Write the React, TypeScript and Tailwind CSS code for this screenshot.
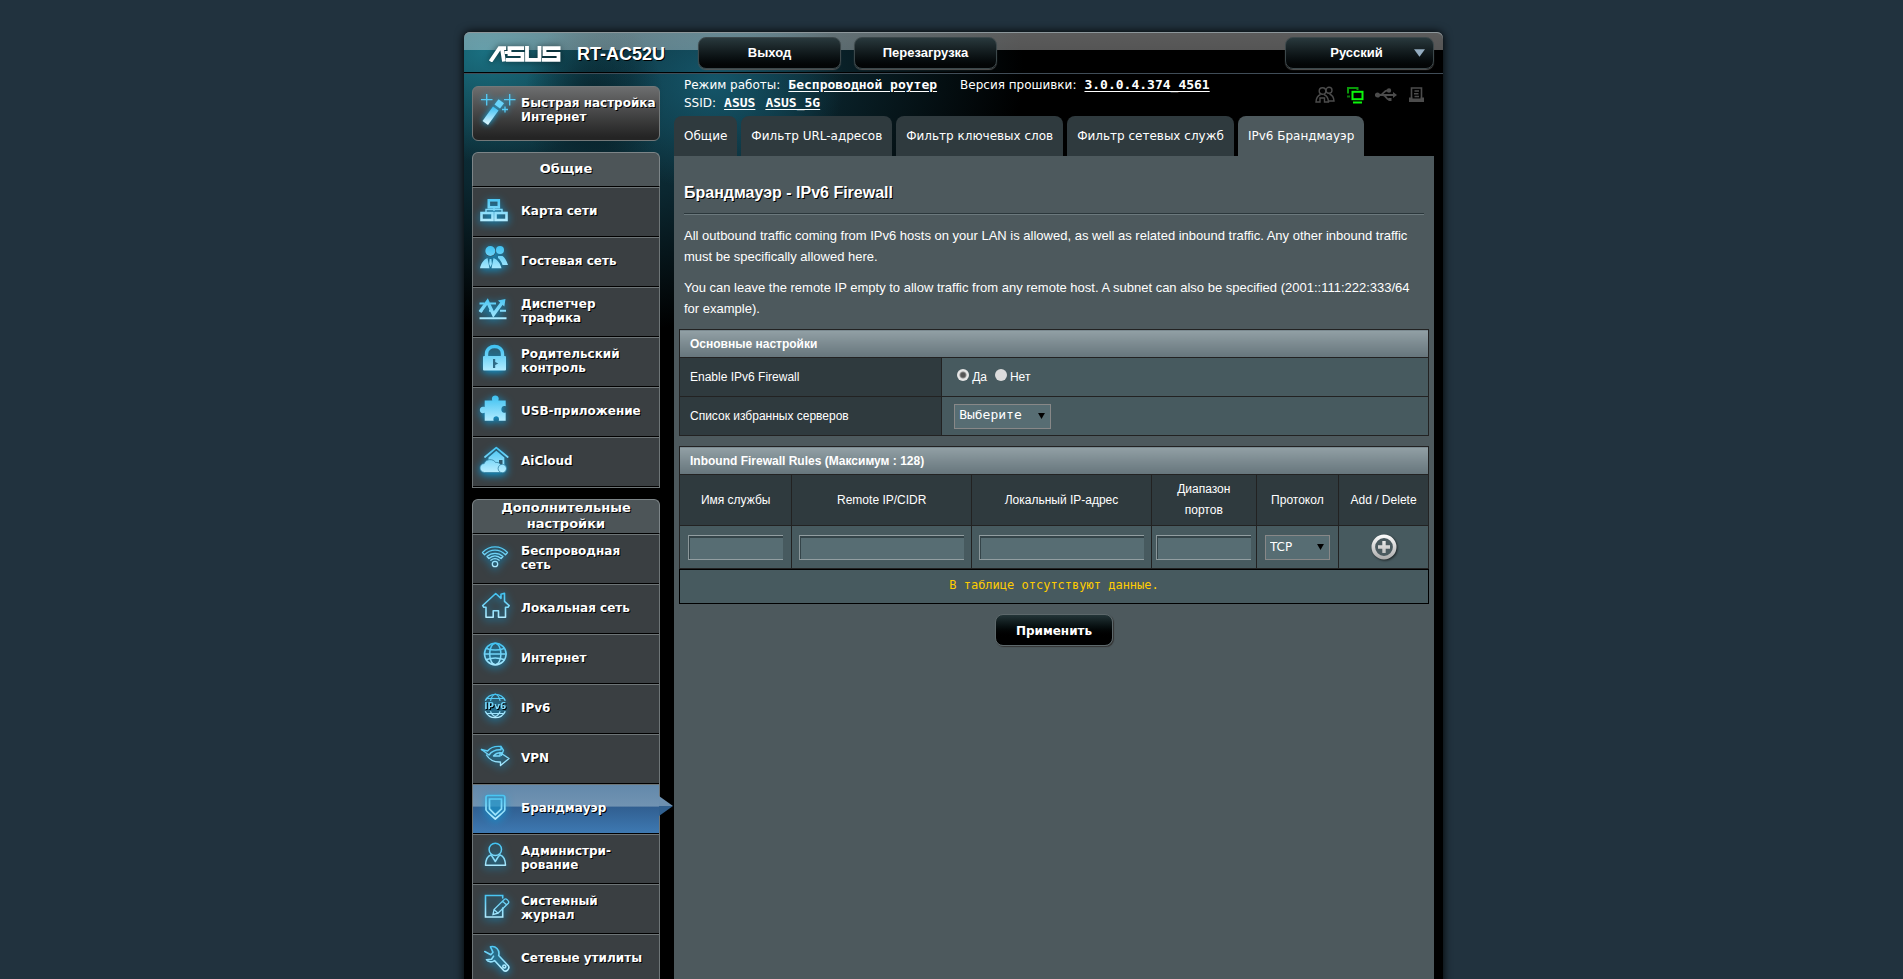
import React, { useId } from "react";

type IconName =
  | "map" | "guest" | "traffic" | "lock" | "usb" | "cloud"
  | "wifi" | "home" | "globe" | "ipv6" | "vpn" | "shield" | "admin" | "log" | "tools";

function MenuIcon({ name }: { name: IconName }) {
  const id = useId();
  const paint = `url(#${id})`;
  const solid = { fill: paint };
  const line = { fill: "none", stroke: paint, strokeWidth: 1.6, strokeLinejoin: "round" as const, strokeLinecap: "round" as const };

  const shapes: Record<IconName, React.ReactNode> = {
    map: (
      <g {...line} strokeWidth={2.6} strokeLinejoin="miter" strokeLinecap="butt">
        <rect x="12.8" y="5.3" width="10" height="7" />
        <path d="M18 12v4M10 17v-2.5h16V17" strokeWidth="1.4" />
        <rect x="5.5" y="18" width="11" height="7" />
        <rect x="19.5" y="18" width="11" height="7" />
      </g>
    ),
    guest: (
      <g {...solid}>
        <circle cx="24" cy="5" r="4" />
        <path d="M22 11h4.500c2 1 4 4.500 5.500 9h-5.500c-1-3-2.500-5.500-4.500-7z" />
        <circle cx="14.300" cy="6" r="5.600" fill="#35525f" />
        <circle cx="14.300" cy="6" r="5" />
        <path d="M11.500 13l2 10.300H4C5 18.500 7.500 14.500 11.500 13zM17.500 13c4 1.500 7 5.500 8 10.300h-10z" />
        <path d="M13.600 14h1.800l.5 5-1.400 3-1.400-3z" />
      </g>
    ),
    traffic: (
      <g {...line}>
        <path d="M3.500 8.500h5M14 8.500h6M3.500 15.700h3M13 15.700h2M24 15.700h6M3.500 23.300h27" strokeWidth="2" strokeLinecap="butt" />
        <path d="M4 17L11.500 6.500l6 13L27 6.500" strokeWidth="3.400" strokeLinejoin="miter" strokeLinecap="butt" />
        <path d="M22 5.500l7.500-1.500-1.200 7.500z" fill={paint} stroke="none" />
      </g>
    ),
    lock: (
      <g>
        <path d="M10.500 12V9c0-10 16-10 16 0v3" {...line} strokeWidth={3.4} />
        <rect x="7" y="11" width="23" height="14.500" rx="1" {...solid} />
        <path d="M17 14v9h2.200v-3l3-1.500-3-1.500v-3z" fill="#2d6a86" />
      </g>
    ),
    usb: (
      <path
        {...solid}
        d="M8.700 5.500h7.600c-2.600-6.800 8.600-6.800 6 0h7.400v5.800c-5.800-2.200-5.800 8.400 0 6.200v8.300h-7c2-6-7-6-5 0h-9v-8c-6.500 2.400-6.500-8 0-5.800z"
      />
    ),
    cloud: (
      <g>
        <path d="M9 12L20.300 2.600 31.700 12" {...line} strokeWidth={1.8} />
        <path d="M12.500 12.500l7.800-6.700 8 6.700v9h-16z" {...solid} />
        <path d="M23 15h3.500v5H23z" fill="#2f5a6d" />
        <path d="M8.500 27.500c-6-.5-6-8.500-.3-9 1.500-5 9.500-5 11.300-1 4-.5 5.800 2 5.300 4.500l-.8 5.500z" {...solid} stroke="#3482a2" strokeWidth="0.800" />
        <circle cx="26.300" cy="23.500" r="4.200" {...solid} stroke="#3482a2" strokeWidth="0.800" />
      </g>
    ),
    wifi: (
      <g {...line} strokeWidth={1.3}>
        <path d="M6.500 10.500c7-7.500 18-7.500 25 0l-2 2.200c-6-6-15-6-21 0z" />
        <path d="M11 14.500c4.500-4.300 11.500-4.300 16 0l-1.900 2c-3.700-3.400-8.500-3.400-12.200 0z" />
        <path d="M14.800 18.200c2.600-2 5.800-2 8.400 0" />
        <circle cx="19" cy="22" r="2.700" />
      </g>
    ),
    home: (
      <path
        {...line}
        d="M6.700 13.500L19.700 1.500l5.300 4.800V2.200l3.500-1v8.100l4.700 4.300-1.200 1.600h-2.500v10h-7v-6.500h-5.300v6.500H10v-10H7.800z"
      />
    ),
    globe: (
      <g {...line} strokeWidth={1.5}>
        <circle cx="19.300" cy="12" r="10.800" />
        <ellipse cx="19.300" cy="12" rx="5.600" ry="10.800" />
        <path d="M10.500 6.500c5.500 2 12.100 2 17.600 0M10.500 17.500c5.500-2 12.100-2 17.600 0M8.500 12h21.600" />
      </g>
    ),
    ipv6: (
      <g {...line} strokeWidth={1.4} strokeLinecap="butt">
        <path d="M9.300 8.800a11 11 0 0 1 20 0M9.300 19.200a11 11 0 0 0 20 0" />
        <path d="M14.500 8.800c.8-3.500 2.300-6 4.800-6.800 2.500.8 4 3.300 4.800 6.800M14.500 19.200c.8 2.500 2.300 4.400 4.800 5.200 2.500-.8 4-2.700 4.800-5.200M11 6.500h16.600M11 21.500h16.600" strokeWidth="1.200" />
        <text x="19.300" y="17.300" textAnchor="middle" fontFamily="DejaVu Sans, sans-serif" fontSize="9" fontWeight="bold" fill={paint} stroke="none">IPv6</text>
      </g>
    ),
    vpn: (
      <g {...line} strokeWidth={1.4}>
        <path d="M5.500 7.500l7.500 5.500c2.500-3.500 7-5.500 12-5.200V4.300l2.500 4-2 5v-2.500c-3.500-.2-6 .8-8 3.200h6.500v-3.500l9 6-8.500 7v-3.500c-6 .3-11-2-14-7" />
        <path d="M5.500 7.500l6 1.500c3-3.500 8-5 13-4.500" />
      </g>
    ),
    shield: (
      <g {...line} strokeWidth={1.7} strokeLinejoin="miter">
        <path d="M12 3.500h15c1 0 1.800.8 1.800 1.800V18c0 1-9.500 9-9.500 9s-9.300-8-9.300-9V5.300c0-1 1-1.800 2-1.800z" fill="#2a91bd55" />
        <path d="M13.500 7h12v9.800l-6.200 6-5.800-6z" />
      </g>
    ),
    admin: (
      <g {...line} strokeWidth={1.5}>
        <circle cx="19.300" cy="7.400" r="6.200" />
        <path d="M15 13c-3.500 1-5.300 5-5.500 10.300h20C29.300 18 27.500 14 24 13" />
        <path d="M15 13l1.500 2 2.800 4.500 2.800-4.500 1.700-2" />
      </g>
    ),
    log: (
      <g {...line} strokeLinejoin="miter">
        <path d="M26.700 6V3.500H9.500V25h17.200v-9" />
        <path d="M17 22.500l1-5L28.500 7.200c1.500-1 5.200 1.800 4 3.800L22 21.200zM18 17.500l4 3.700M26.500 9.200l4 3.500" strokeWidth="1.300" />
      </g>
    ),
    tools: (
      <g {...line} strokeWidth={1.6}>
        <path d="M8.800 9.500l6 3.300 2.200-2.500-2.500-5.500c5-1.500 9.500 3 8.200 8.700L32.500 24c1.500 3-2.300 6.500-5 4.300L18.500 18.500c-2.500 2-6.500 1.800-8-.8l5-.5 2-3" fill="#2a91bd44" />
        <circle cx="28.300" cy="24.500" r="1.500" />
      </g>
    ),
  };

  return (
    <svg
      aria-hidden="true"
      viewBox="0 0 36 34"
      className="h-[34px] w-9 shrink-0 overflow-visible drop-shadow-[0_2px_4px_#0a9edd]"
    >
      <defs>
        <linearGradient id={id} gradientUnits="userSpaceOnUse" x1="0" y1="2" x2="0" y2="26">
          <stop offset="0" stopColor="#42c3f2" />
          <stop offset="1" stopColor="#b4ecff" />
        </linearGradient>
      </defs>
      {shapes[name]}
    </svg>
  );
}

type Item = { icon: IconName; lines: string[]; active?: boolean };

const general: Item[] = [
  { icon: "map", lines: ["Карта сети"] },
  { icon: "guest", lines: ["Гостевая сеть"] },
  { icon: "traffic", lines: ["Диспетчер", "трафика"] },
  { icon: "lock", lines: ["Родительский", "контроль"] },
  { icon: "usb", lines: ["USB-приложение"] },
  { icon: "cloud", lines: ["AiCloud"] },
];

const advanced: Item[] = [
  { icon: "wifi", lines: ["Беспроводная", "сеть"] },
  { icon: "home", lines: ["Локальная сеть"] },
  { icon: "globe", lines: ["Интернет"] },
  { icon: "ipv6", lines: ["IPv6"] },
  { icon: "vpn", lines: ["VPN"] },
  { icon: "shield", lines: ["Брандмауэр"], active: true },
  { icon: "admin", lines: ["Администри-", "рование"] },
  { icon: "log", lines: ["Системный", "журнал"] },
  { icon: "tools", lines: ["Сетевые утилиты"] },
];

const menuText = "font-['DejaVu_Sans',sans-serif] text-[12px] font-bold leading-[14px] text-white [text-shadow:1px_1px_0_#000]";

function Menu({ title, items }: { title: string; items: Item[] }) {
  return (
    <nav aria-label={title} className={menuText}>
      <h2 className="flex h-[35px] items-center justify-center rounded-t-md border-x border-t border-b border-[#7d8588] border-b-black bg-[#4d5558] px-4 pb-px text-center text-[13px] leading-4">
        {title}
      </h2>
      <ul className="border-x border-b border-[#6e7577]">
        {items.map((item) => (
          <li key={item.icon} className="relative">
            <a
              href="#"
              aria-current={item.active ? "page" : undefined}
              className={
                "flex h-[50px] items-center gap-[9px] border-t border-b border-t-[#6e7577] border-b-black pl-[3px] " +
                (item.active
                  ? "bg-[linear-gradient(to_bottom,#6389ab_0%,#7193b2_44%,#315f91_46%,#3e79b2_100%)]"
                  : "bg-[#3a3f42]")
              }
            >
              <MenuIcon name={item.icon} />
              <span className="pb-[3px] whitespace-nowrap">
                {item.lines.map((text) => (
                  <span key={text} className="block">{text}</span>
                ))}
              </span>
            </a>
            {item.active && (
              <svg aria-hidden="true" viewBox="0 0 14 20" className="absolute top-3 -right-[14px] h-5 w-[14px]">
                <path d="M0 0l14 10H0z" fill="#6d90b0" />
                <path d="M0 20l14-10H0z" fill="#31608f" />
              </svg>
            )}
          </li>
        ))}
      </ul>
    </nav>
  );
}

const tabs = ["Общие", "Фильтр URL-адресов", "Фильтр ключевых слов", "Фильтр сетевых служб", "IPv6 Брандмауэр"];

const topButton =
  "h-8 rounded-lg border border-[#3c484b] bg-linear-to-b from-[#29393d] to-[#030506] to-90% text-[13px] font-bold text-white shadow-[0_1px_1px_#555]";
const field =
  "block h-[25px] border-y border-l border-y-[#929ea1] border-l-[#8a9699] bg-[#576d73] px-1 text-[12px] text-white shadow-[inset_1px_2px_0_#344449] outline-none";
const th = "border border-[#222] bg-[#2f3a3e] px-2 py-1 font-normal leading-[21px]";
const td = "border border-[#222] bg-[#475a5f]";
const caption = "h-[28px] border border-[#222] bg-linear-to-b from-[#92a0a5] to-[#66757c] pl-[10px] text-left font-bold";
const infoLink = "font-['DejaVu_Sans_Mono',monospace] text-[13px] font-bold underline underline-offset-2";

function SelectArrow({ className }: { className: string }) {
  return (
    <svg aria-hidden="true" viewBox="0 0 8 7" className={"pointer-events-none absolute h-[6px] w-[7px] " + className}>
      <path d="M0 0h8L4 7z" fill="currentColor" />
    </svg>
  );
}

export default function App() {
  return (
    <div className="h-screen overflow-hidden bg-[#21323e] pt-8 pl-1 font-['Liberation_Sans',Arial,sans-serif] text-[12px] text-white">
      <div className="mx-auto min-h-full max-w-[979px] rounded-t-md bg-black bg-[radial-gradient(ellipse_70px_90px_at_130px_70px,#061a21cc_0%,#061a2100_100%),radial-gradient(ellipse_150px_110px_at_20px_20px,#1a6f80_0%,#1a6f8000_100%),radial-gradient(ellipse_130px_110px_at_250px_50px,#15566a_0%,#15566a00_100%),radial-gradient(ellipse_440px_260px_at_120px_40px,#0f3d4a_0%,#0b2730_50%,#00000000_100%)] shadow-[0_0_10px_#000]">
        <header className="flex h-[42px] items-center rounded-t-md border-b border-[#404d58] bg-[linear-gradient(to_bottom,#ffffff5c_0,#ffffff55_18px,#00000000_18px)] pr-[9px] pl-[25px] shadow-[inset_0_1px_0_#8d979b,inset_0_-1px_0_#000]">
          <svg role="img" aria-label="ASUS" viewBox="0 0 72 16" className="mt-0.5 h-4 w-[72px] drop-shadow-[0_0_3px_#0008]">
            <g fill="none" stroke="#fff" strokeWidth="3.800">
              <path d="M1.500 15.500L10.500 2.200H17M12.800 1.500l2.200 14" />
              <path d="M35 2.200H20.500v5.800h13v5.800H17M17.500 5v3" />
              <path d="M38 0v13.800h12.500V0" />
              <path d="M71.500 2.200H55.500v5.800h14v5.800H53" />
            </g>
          </svg>
          <h1 className="mt-0.5 ml-4 w-[121px] text-[18px] leading-6 font-bold [text-shadow:1px_1px_0_#000]">RT-AC52U</h1>
          <button type="button" className={topButton + " w-[143px]"}>Выход</button>
          <button type="button" className={topButton + " ml-[13px] w-[143px]"}>Перезагрузка</button>
          <div className="relative ml-auto">
            <select aria-label="Язык" className={topButton + " w-[149px] appearance-none pr-1.5 text-center [text-align-last:center]"}>
              <option>Русский</option>
            </select>
            <svg aria-hidden="true" viewBox="0 0 12 8" className="pointer-events-none absolute top-3 right-[9px] h-2 w-[11px]">
              <path d="M0 0h12L6 8z" fill="#94acc0" />
            </svg>
          </div>
        </header>

        <div className="flex items-start gap-[14px] pr-[9px] pl-2">
          <aside className="flex w-[188px] shrink-0 flex-col pt-3">
            <a
              href="#"
              className={
                "mb-[11px] flex h-[55px] items-start rounded-md border border-[#737879] bg-linear-to-b from-[#6d6e6f] to-[#242424] to-95% pt-1 pl-[3px] " + menuText
              }
            >
              <svg aria-hidden="true" viewBox="0 0 44 40" className="h-10 w-11 shrink-0 overflow-visible drop-shadow-[0_0_3px_#12aeea]">
                <defs>
                  <linearGradient id="wand" x1="0" y1="0" x2="0" y2="1">
                    <stop offset="0" stopColor="#35bdf3" />
                    <stop offset="1" stopColor="#e4f9ff" />
                  </linearGradient>
                </defs>
                <path d="M6.500 30L17 15.500l5.500 4L12 34z" fill="url(#wand)" />
                <path d="M18.500 13.500l4-5.200 5.500 4-4 5.200z" fill="#6ad4fa" />
                <path d="M10.700 3v11.500M5 8.700h11.500M33.700 3v11.500M28 8.700h11.500M29 15.500v6M26 18.500h6" stroke="#55cbf6" strokeWidth="1.300" />
              </svg>
              <span className="mt-[5px] flex-1 pl-px whitespace-nowrap">Быстрая настройка<br />Интернет</span>
            </a>
            <Menu title="Общие" items={general} />
            <div className="mt-[11px]">
              <Menu title="Дополнительные настройки" items={advanced} />
            </div>
          </aside>

          <main className="min-w-0 flex-1">
            <div className="flex h-[42px] justify-between pl-[10px] font-['DejaVu_Sans',sans-serif] leading-[18px]">
              <div className="pt-[2px]">
                <p className="h-[18px]">
                  Режим работы:<a href="#" className={infoLink + " ml-2"}>Беспроводной роутер</a>
                  <span className="ml-[23px]">Версия прошивки:</span><a href="#" className={infoLink + " ml-2"}>3.0.0.4.374_4561</a>
                </p>
                <p className="h-[18px]">
                  SSID:<a href="#" className={infoLink + " ml-2"}>ASUS</a><a href="#" className={infoLink + " ml-[10px]"}>ASUS_5G</a>
                </p>
              </div>
              <div className="flex gap-[11px] pt-3 pr-[9px] text-[#4c4c4c]">
                <svg role="img" aria-label="Гости" viewBox="0 0 20 18" className="h-[18px] w-5" fill="none" stroke="currentColor" strokeWidth="1.400">
                  <circle cx="7.500" cy="5" r="3.300" /><circle cx="14" cy="4.300" r="3" />
                  <path d="M5.500 8.500C3 9.500 1.200 12 1 16h4v-4h4.500v4h4c-.2-4-2-6.500-4.500-7.500M14.500 8c2.500 1 4.300 3.500 4.500 7h-5" />
                </svg>
                <svg role="img" aria-label="Клиенты" viewBox="0 0 18 18" className="h-[18px] w-[18px]" fill="none">
                  <path d="M2 7.500V2h9.500v2" stroke="#0a9a0a" strokeWidth="2" /><path d="M1 10.500h3" stroke="#0a7a0a" strokeWidth="2" />
                  <rect x="6.500" y="5.800" width="10" height="7.400" stroke="#0cf50c" strokeWidth="2" />
                  <path d="M7 16.500h9" stroke="#0cf50c" strokeWidth="2" />
                </svg>
                <svg role="img" aria-label="USB" viewBox="0 0 22 18" className="h-[18px] w-[22px]" fill="none" stroke="currentColor" strokeWidth="1.800">
                  <path d="M2 9h17M5 9c3 0 4-4.500 7-4.500h2M8 9c3 0 3 4.500 6 4.500h1" />
                  <circle cx="2.500" cy="9" r="1.700" fill="currentColor" /><circle cx="14" cy="4.500" r="1.300" fill="currentColor" />
                  <path d="M18 6l4 3-4 3zM13.500 12h3v3h-3z" fill="currentColor" stroke="none" />
                </svg>
                <svg role="img" aria-label="Принтер" viewBox="0 0 17 18" className="h-[18px] w-[17px]" fill="none" stroke="currentColor" strokeWidth="1.600">
                  <path d="M3.500 12V2h10v10M6.500 5h4.500M6 7.800h4.500M6.500 10.500h4.500" /><path d="M1 11.500h3.500v1h8v-1H16V16H1z" fill="currentColor" stroke="none" />
                </svg>
              </div>
            </div>

            <nav aria-label="Разделы" className="flex h-10 gap-1 font-['DejaVu_Sans',sans-serif]">
              {tabs.map((tab) => (
                <a
                  key={tab}
                  href="#"
                  className={
                    "flex items-center rounded-t-lg px-[10px] whitespace-nowrap " +
                    (tab === "IPv6 Брандмауэр" ? "bg-[#4d595d]" : "bg-[#2f3a3e]")
                  }
                >
                  {tab}
                </a>
              ))}
            </nav>

            <section className="min-h-[900px] bg-[#4d595d] px-[5px] pt-[27px]">
              <div className="px-[5px]">
                <h2 className="text-[16px] leading-5 font-bold [text-shadow:1px_1px_0_#000]">Брандмауэр - IPv6 Firewall</h2>
                <hr className="mt-[10px] border-t border-b border-t-[#2b373b] border-b-[#6c797d]" />
                <div className="mt-[10px] text-[13px] leading-[21px]">
                  <p>
                    All outbound traffic coming from IPv6 hosts on your LAN is allowed, as well as related inbound traffic. Any other inbound traffic must be specifically allowed here.
                  </p>
                  <p className="mt-[10px]">
                    You can leave the remote IP empty to allow traffic from any remote host. A subnet can also be specified (2001::111:222:333/64 for example).
                  </p>
                </div>
              </div>

              <table className="mt-[10px] w-full table-fixed border-collapse">
                <colgroup><col className="w-[35%]" /><col /></colgroup>
                <thead>
                  <tr><th colSpan={2} className={caption}>Основные настройки</th></tr>
                </thead>
                <tbody>
                  <tr className="h-[39px]">
                    <th className="border border-[#222] bg-[#2f3a3e] pl-[10px] text-left font-normal">Enable IPv6 Firewall</th>
                    <td className={td + " pl-[15px]"}>
                      <div className="flex items-center gap-2">
                        {["Да", "Нет"].map((option) => (
                          <label key={option} className="flex items-center gap-[3px]">
                            <input
                              type="radio"
                              name="firewall"
                              defaultChecked={option === "Да"}
                              className="mb-1 h-[12px] w-[12px] appearance-none rounded-full bg-[#dcdcdc] checked:bg-[radial-gradient(circle,#555_0_2px,#8a8a8a_3px,#e6e6e6_4px)]"
                            />
                            {option}
                          </label>
                        ))}
                      </div>
                    </td>
                  </tr>
                  <tr className="h-[39px]">
                    <th className="border border-[#222] bg-[#2f3a3e] pl-[10px] text-left font-normal">
                      <label htmlFor="servers">Список избранных серверов</label>
                    </th>
                    <td className={td + " pl-3"}>
                      <div className="relative w-[97px]">
                        <select id="servers" className="block h-[25px] w-full appearance-none border border-[#888] bg-[#576d73] px-1 pb-0.5 font-['DejaVu_Sans_Mono',monospace] text-[13px]">
                          <option>Выберите</option>
                        </select>
                        <SelectArrow className="top-[9px] right-[6px] text-black" />
                      </div>
                    </td>
                  </tr>
                </tbody>
              </table>

              <table className="mt-[10px] w-full table-fixed border-collapse text-center">
                <colgroup>
                  <col className="w-[15%]" /><col className="w-[24%]" /><col className="w-[24%]" />
                  <col className="w-[14%]" /><col className="w-[11%]" /><col className="w-[12%]" />
                </colgroup>
                <thead>
                  <tr><th colSpan={6} className={caption}>Inbound Firewall Rules (Максимум : 128)</th></tr>
                  <tr className="h-[51px]">
                    <th className={th}>Имя службы</th>
                    <th className={th}>Remote IP/CIDR</th>
                    <th className={th}>Локальный IP-адрес</th>
                    <th className={th}>Диапазон портов</th>
                    <th className={th}>Протокол</th>
                    <th className={th + " whitespace-nowrap"}>Add / Delete</th>
                  </tr>
                </thead>
                <tbody>
                  <tr className="h-[43px]">
                    <td className={td}><input aria-label="Имя службы" className={field + " mx-auto w-[95px]"} /></td>
                    <td className={td}><input aria-label="Remote IP/CIDR" className={field + " mx-auto w-[165px]"} /></td>
                    <td className={td}><input aria-label="Локальный IP-адрес" className={field + " mx-auto w-[165px]"} /></td>
                    <td className={td}><input aria-label="Диапазон портов" className={field + " mx-auto w-[95px]"} /></td>
                    <td className={td}>
                      <div className="relative mx-auto w-[65px]">
                        <select aria-label="Протокол" className="block h-[25px] w-full appearance-none border border-[#888] bg-[#576d73] px-1 font-['DejaVu_Sans',sans-serif] text-[12px]">
                          <option>TCP</option>
                        </select>
                        <SelectArrow className="top-[9px] right-[6px] text-black" />
                      </div>
                    </td>
                    <td className={td}>
                      <button type="button" aria-label="Добавить" className="mx-auto block h-[26px] w-[26px]">
                        <svg aria-hidden="true" viewBox="0 0 26 26" className="h-[26px] w-[26px] overflow-visible drop-shadow-[1px_1px_1px_#0009]">
                          <defs>
                            <linearGradient id="plus" gradientUnits="userSpaceOnUse" x1="0" y1="0" x2="0" y2="26">
                              <stop offset="0" stopColor="#fff" /><stop offset="1" stopColor="#a9a9a9" />
                            </linearGradient>
                          </defs>
                          <circle cx="13" cy="13" r="10.700" fill="#4a5a5f" stroke="url(#plus)" strokeWidth="3.600" />
                          <path d="M11.300 7h3.400v4.300H19v3.400h-4.300V19h-3.400v-4.300H7v-3.400h4.300z" fill="url(#plus)" />
                        </svg>
                      </button>
                    </td>
                  </tr>
                </tbody>
              </table>
              <p className="flex h-[35px] items-center justify-center border border-black bg-[#475a5f] pb-1 font-['DejaVu_Sans_Mono',monospace] text-[#fc0]">
                В таблице отсутствуют данные.
              </p>
              <div className="mt-[10px] flex justify-center">
                <button type="button" className="h-8 w-[118px] rounded-lg border border-[#5d686b] bg-linear-to-b from-[#233538] to-black to-80% pt-0.5 font-['DejaVu_Sans',sans-serif] text-[12px] font-bold text-white shadow-[1px_1px_1px_#333]">
                  Применить
                </button>
              </div>
            </section>
          </main>
        </div>
      </div>
    </div>
  );
}
